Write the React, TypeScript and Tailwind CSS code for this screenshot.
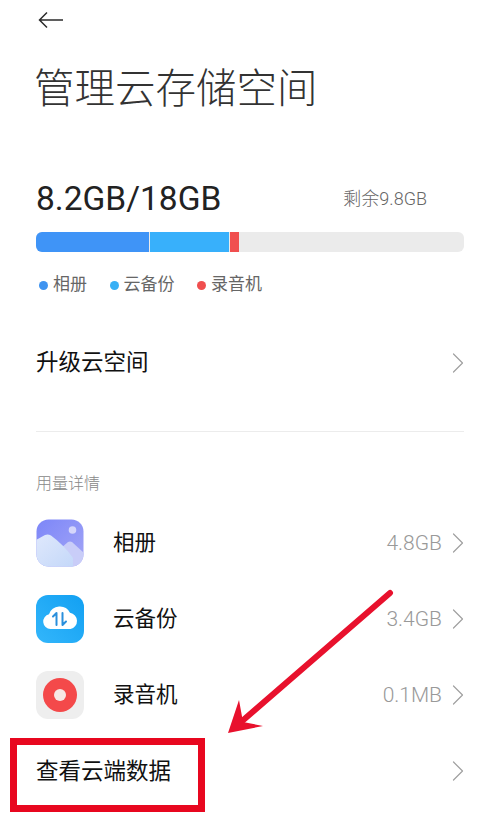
import { ChevronRight } from 'lucide-react'

const FONT = "font-['Roboto','Noto_Sans_CJK_SC',sans-serif]"

function BackArrow() {
  return (
    <svg viewBox="0 0 26 18" fill="none" className="w-[26px] h-[18px] ml-[2px]">
      <path d="M25 9 H1.500 M9 1.500 L1.500 9 L9 16.500" stroke="#2b2b2b" strokeWidth="1.500" />
    </svg>
  )
}

function GalleryIcon() {
  return (
    <svg viewBox="0 0 48 48" className="w-[48px] h-[48px]">
      <defs>
        <linearGradient id="sky" x1="0" y1="0" x2="1" y2="1">
          <stop offset="0" stopColor="#7c86f8" />
          <stop offset="1" stopColor="#a4a6f6" />
        </linearGradient>
        <linearGradient id="hill" x1="0" y1="0" x2="1" y2="1">
          <stop offset="0" stopColor="#dfe8fc" />
          <stop offset="1" stopColor="#c4d8f9" />
        </linearGradient>
        <clipPath id="galleryClip">
          <rect x="0.5" y="0.5" width="47" height="47" rx="12" />
        </clipPath>
      </defs>
      <g clipPath="url(#galleryClip)">
        <rect width="48" height="48" fill="url(#sky)" />
        <circle cx="36.5" cy="11" r="3.8" fill="#d5d6fb" />
        <path d="M24 30 L32 23 Q34 22 36 23 L48 34 V48 H24 Z" fill="#c9cdf8" />
        <path d="M0 21 L9 16 Q12 15 15 16.500 Q28 26 37 39 V48 H0 Z" fill="url(#hill)" />
      </g>
    </svg>
  )
}

function BackupIcon() {
  return (
    <svg viewBox="0 0 48 48" className="w-[48px] h-[48px]">
      <defs>
        <linearGradient id="backup" x1="1" y1="0" x2="0" y2="1">
          <stop offset="0" stopColor="#12a0f2" />
          <stop offset="1" stopColor="#33b6fb" />
        </linearGradient>
      </defs>
      <rect width="48" height="48" rx="12" fill="url(#backup)" />
      <path
        d="M14.500 34 a7.500 7.500 0 0 1 -1.500 -14.800 a11.500 11.500 0 0 1 21 -1.500 a8.300 8.300 0 0 1 0.500 16.300 Z"
        fill="#fff"
      />
      <path
        d="M20.500 30 V18 L17 21.500 M26.500 18 V30 L30 26.500"
        fill="none"
        stroke="#2a8fdc"
        strokeWidth="2"
        strokeLinecap="round"
        strokeLinejoin="round"
      />
    </svg>
  )
}

function RecorderIcon() {
  return (
    <svg viewBox="0 0 48 48" className="w-[48px] h-[48px]">
      <rect width="48" height="48" rx="12" fill="#eeeeee" />
      <circle cx="24" cy="24" r="17" fill="#f4494a" />
      <circle cx="24" cy="24" r="6" fill="#f7e9e6" />
    </svg>
  )
}

function Chevron() {
  return <ChevronRight strokeWidth={0.8} className="w-[36px] h-[36px] text-[#a0a0a0] ml-[-2px] mr-[-12px] shrink-0" />
}

function Legend({ color, label }: { color: string; label: string }) {
  return (
    <div className="flex items-center gap-[5px]">
      <span className={`w-[9px] h-[9px] rounded-full ${color}`} />
      <span className="text-[17px] text-[#666]">{label}</span>
    </div>
  )
}

function AppRow({ icon, label, value }: { icon: React.ReactNode; label: string; value: string }) {
  return (
    <div className="h-[76px] flex items-center">
      {icon}
      <span className="ml-[29px] mt-[1px] text-[21.500px] text-[#111]">{label}</span>
      <span className="ml-auto mt-[1px] text-[21px] font-light text-[#999]">{value}</span>
      <Chevron />
    </div>
  )
}

export default function App() {
  return (
    <div className={`relative w-[500px] h-[829px] bg-white overflow-hidden ${FONT}`}>
      <div className="px-[36px]">
        <div className="h-[40px] flex items-center">
          <BackArrow />
        </div>
        <h1 className="mt-[28px] ml-[-2px] text-[40.500px] leading-[42px] font-light text-[#333]">管理云存储空间</h1>

        <div className="mt-[69px] flex items-center justify-between h-[40px]">
          <span className="text-[33.500px] text-[#222]">8.2GB/18GB</span>
          <span className="mr-[37px] mt-[-2px] text-[18px] font-light text-[#666]">剩余9.8GB</span>
        </div>
        <div className="mt-[13px] h-[20px] rounded-[6px] bg-[#ebebeb] overflow-hidden flex">
          <div className="w-[113px] bg-[#3f94f7]" />
          <div className="w-[79px] ml-[1px] bg-[#38b0fb]" />
          <div className="w-[9px] ml-[1px] bg-[#f04f4f]" />
        </div>
        <div className="mt-[23px] h-[20px] ml-[3px] flex items-center gap-[22.500px]">
          <Legend color="bg-[#3f94f0]" label="相册" />
          <Legend color="bg-[#38b0f5]" label="云备份" />
          <Legend color="bg-[#f04f4f]" label="录音机" />
        </div>

        <div className="mt-[46px] h-[44px] flex items-center justify-between">
          <span className="text-[22.500px] text-[#111]">升级云空间</span>
          <Chevron />
        </div>
        <div className="mt-[46px] border-t border-[#ececec]" />

        <p className="mt-[42px] text-[16px] leading-[20px] font-light text-[#888]">用量详情</p>
        <div className="mt-[11px]">
          <AppRow icon={<GalleryIcon />} label="相册" value="4.8GB" />
          <AppRow icon={<BackupIcon />} label="云备份" value="3.4GB" />
          <AppRow icon={<RecorderIcon />} label="录音机" value="0.1MB" />
        </div>
        <div className="h-[76px] flex items-center justify-between">
          <span className="mt-[1px] text-[22.500px] text-[#111]">查看云端数据</span>
          <Chevron />
        </div>
      </div>

      {/* annotation on top of the screenshot */}
      <div className="absolute left-[10px] top-[738px] w-[195px] h-[74px] border-[7px] border-[#e8071f]" />
      <svg viewBox="0 0 500 829" className="absolute inset-0 w-[500px] h-[829px] pointer-events-none">
        <path d="M390 593 L241 722" stroke="#e8112d" strokeWidth="6" strokeLinecap="round" fill="none" />
        <path d="M228 733 L239 700 L243 722 L263 726 Z" fill="#e8112d" />
      </svg>
    </div>
  )
}
